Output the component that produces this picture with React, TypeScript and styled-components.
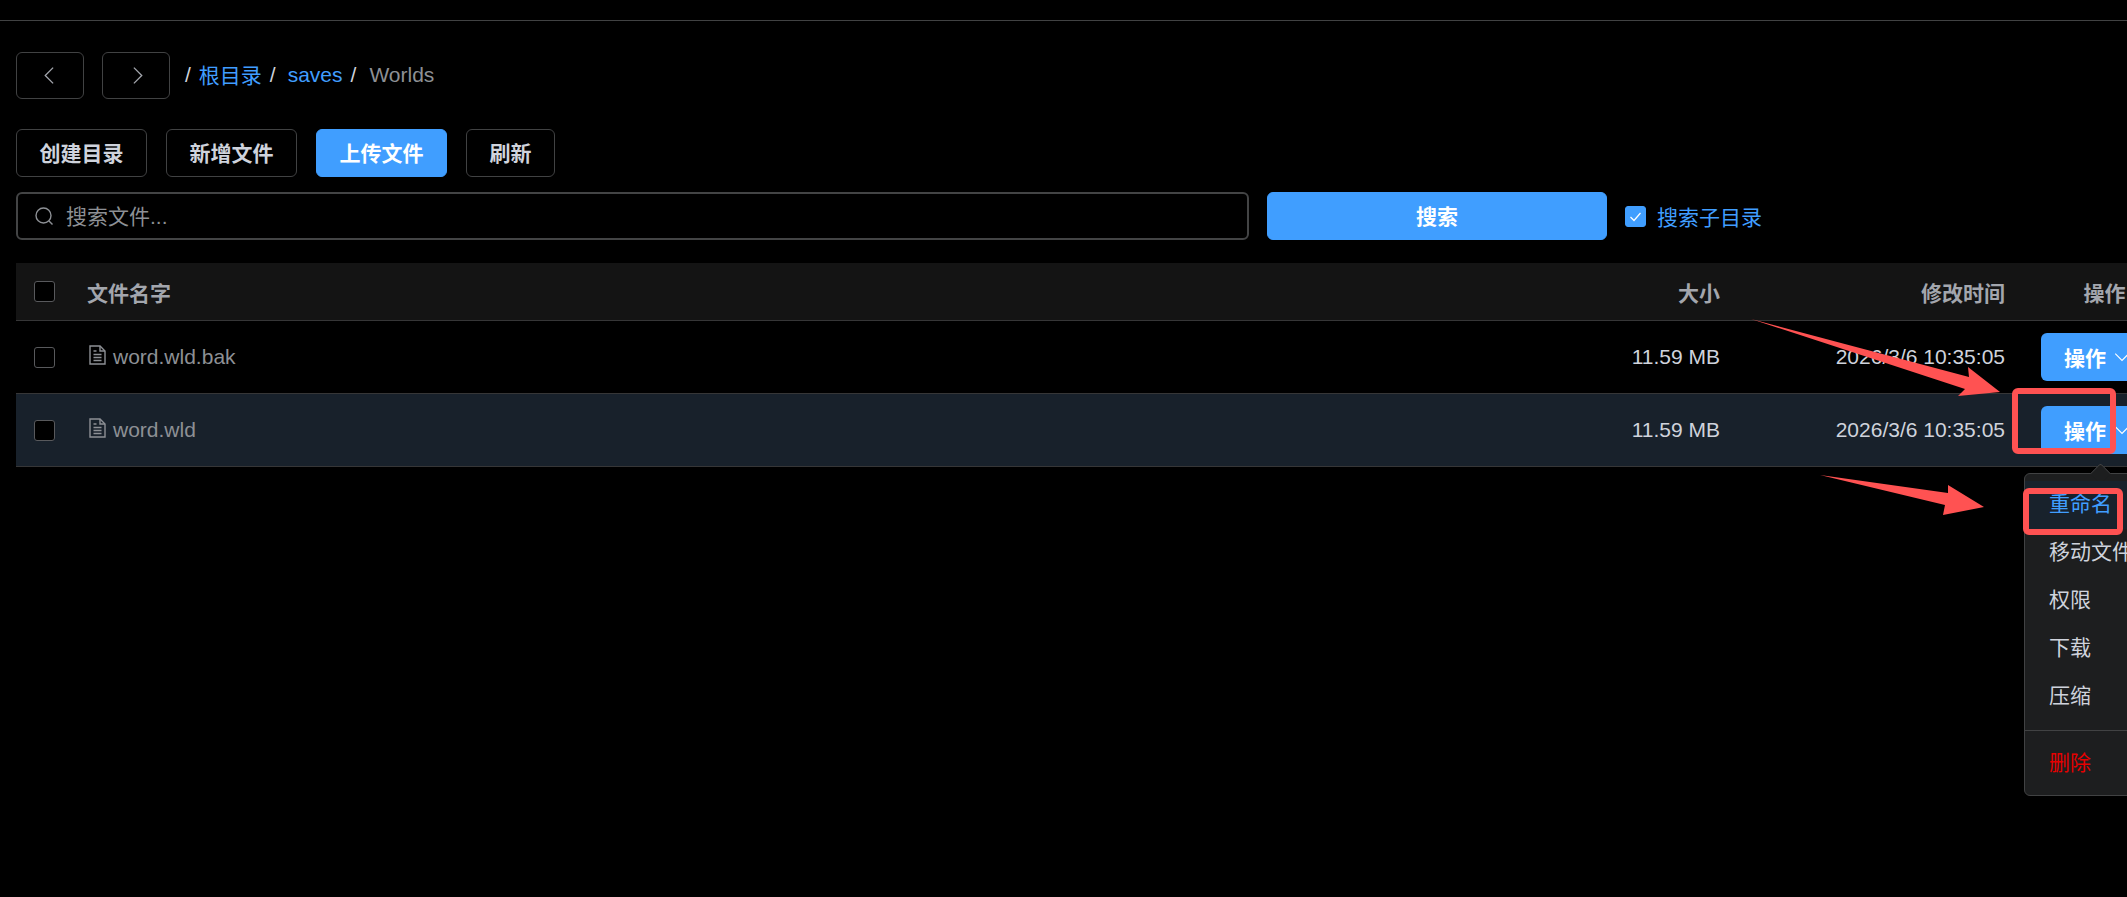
import styled, { createGlobalStyle } from "styled-components";

const GlobalStyle = createGlobalStyle`
  html, body {
    margin: 0;
    padding: 0;
    background: #000;
  }
  body {
    font-family: "Liberation Sans", "Noto Sans CJK SC", sans-serif;
    font-size: 21px;
    color: #cfd3dc;
  }
`;

const Page = styled.div`
  position: relative;
  width: 2127px;
  height: 897px;
  overflow: hidden;
  background: #000;
`;

const TopBar = styled.div`
  height: 20px;
  border-bottom: 1px solid #414243;
`;

const Content = styled.div`
  display: flex;
  flex-direction: column;
  padding: 31px 0 0 16px;
`;

const NavRow = styled.div`
  display: flex;
  align-items: center;
  height: 47px;
`;

const NavButton = styled.button`
  display: flex;
  align-items: center;
  justify-content: center;
  width: 68px;
  height: 47px;
  margin-right: 18px;
  padding: 0;
  background: transparent;
  border: 1px solid #414243;
  border-radius: 6px;
  color: #a3a6ad;
`;

const Crumbs = styled.div`
  display: flex;
  align-items: center;
  margin: 0 0 1px -3px;
  white-space: nowrap;
`;

const Sep = styled.span`
  margin-right: ${(p: { $gap?: number }) => p.$gap ?? 8}px;
  color: #cfd3dc;
`;

const CrumbLink = styled.span<{ $cjk?: boolean }>`
  margin-right: 8px;
  margin-bottom: ${(p) => (p.$cjk ? 2 : 0)}px;
  color: #409eff;
`;

const CrumbCurrent = styled.span`
  color: #8d9095;
`;

const ActionRow = styled.div`
  display: flex;
  gap: 19px;
  margin-top: 30px;
`;

const Button = styled.button<{ $primary?: boolean; $wide?: boolean }>`
  box-sizing: border-box;
  height: 48px;
  padding: 0 ${(p) => (p.$wide ? 0 : 22.5)}px;
  width: ${(p) => (p.$wide ? "340px" : "auto")};
  font-family: inherit;
  font-size: 21px;
  font-weight: 700;
  line-height: 1;
  color: ${(p) => (p.$primary ? "#fff" : "#cfd3dc")};
  background: ${(p) => (p.$primary ? "#409eff" : "transparent")};
  border: 1px solid ${(p) => (p.$primary ? "#409eff" : "#414243")};
  border-radius: 6px;
`;

const SearchRow = styled.div`
  display: flex;
  align-items: center;
  margin-top: 15px;
`;

const SearchBox = styled.div`
  display: flex;
  align-items: center;
  gap: 11px;
  box-sizing: border-box;
  width: 1233px;
  height: 48px;
  margin-right: 18px;
  padding: 0 16px;
  border: 2px solid #434445;
  border-radius: 6px;
  color: #8d9095;
`;

const Placeholder = styled.span`
  margin-top: -3px;
  color: #8d9095;
`;

const CheckLabel = styled.label`
  display: flex;
  align-items: center;
  gap: 11px;
  margin-left: 18px;
  color: #409eff;
`;

const CheckBox = styled.span<{ $checked?: boolean }>`
  display: flex;
  align-items: center;
  justify-content: center;
  box-sizing: border-box;
  flex: none;
  width: 21px;
  height: 21px;
  background: ${(p) => (p.$checked ? "#409eff" : "#000")};
  border: 1px solid ${(p) => (p.$checked ? "#409eff" : "#58595c")};
  border-radius: 3px;
  color: #fff;
`;

const Table = styled.div`
  width: 2170px;
  margin-top: 23px;
`;

const TableRow = styled.div<{ $head?: boolean; $active?: boolean }>`
  display: grid;
  grid-template-columns: 53px 1fr 160px 285px 163px;
  align-items: center;
  box-sizing: border-box;
  height: ${(p) => (p.$head ? 58 : 73)}px;
  background: ${(p) => (p.$head ? "#141414" : p.$active ? "#18212b" : "#000")};
  border-bottom: 1px solid #363637;
  font-weight: ${(p) => (p.$head ? 700 : 400)};
  color: ${(p) => (p.$head ? "#a3a6ad" : "#cfd3dc")};
`;

const SelectCell = styled.div`
  padding-left: 18px;
  display: flex;
`;

const NameCell = styled.div`
  display: flex;
  align-items: center;
  gap: 5px;
  padding-left: 18px;
  color: #a3a6ad;
`;

const FileName = styled.span`
  color: #8d9095;
`;

const FileGlyph = styled.svg`
  flex: none;
  width: 21px;
  height: 21px;
  margin-top: -5px;
  color: #8d9095;
`;

const NumCell = styled.div`
  padding-right: 18px;
  text-align: right;
  white-space: nowrap;
`;

const OpHead = styled.div`
  text-align: center;
`;

const OpCell = styled.div`
  padding-left: 18px;
`;

const OpButton = styled.button`
  display: inline-flex;
  align-items: center;
  gap: 7px;
  height: 48px;
  padding: 0 16px 0 23px;
  font-family: inherit;
  font-size: 21px;
  font-weight: 700;
  color: #fff;
  background: #409eff;
  border: 0;
  border-radius: 6px;
`;

const Menu = styled.div`
  position: absolute;
  left: 2024px;
  top: 473px;
  box-sizing: border-box;
  width: 134px;
  height: 323px;
  padding: 7px 0;
  background: #1d1e1f;
  border: 1px solid #414243;
  border-radius: 6px;
  &::before {
    content: "";
    position: absolute;
    left: 68px;
    top: -8px;
    width: 14px;
    height: 14px;
    background: #1d1e1f;
    border-left: 1px solid #414243;
    border-top: 1px solid #414243;
    transform: rotate(45deg);
    border-top-left-radius: 3px;
  }
`;

const MenuItem = styled.div<{ $active?: boolean; $danger?: boolean }>`
  position: relative;
  height: 48px;
  padding-left: 24px;
  line-height: 46px;
  white-space: nowrap;
  background: ${(p) => (p.$active ? "#18222c" : "transparent")};
  color: ${(p) => (p.$danger ? "#e60000" : p.$active ? "#409eff" : "#cfd3dc")};
`;

const MenuDivider = styled.div`
  margin: 9px 0;
  border-top: 1px solid #414243;
`;

const Overlay = styled.svg`
  position: absolute;
  left: 0;
  top: 0;
  width: 2127px;
  height: 897px;
  pointer-events: none;
`;

function Chevron({ dir, size }: { dir: "left" | "right" | "down"; size: number }) {
  const d = {
    left: "M10 2 4 8l6 6",
    right: "M6 2l6 6-6 6",
    down: "M2 5l6 6 6-6",
  }[dir];
  return (
    <svg width={size} height={size} viewBox="0 0 16 16" fill="none" stroke="currentColor" strokeWidth="1">
      <path d={d} />
    </svg>
  );
}

function SearchGlyph() {
  return (
    <svg width="21" height="21" viewBox="0 0 21 21" fill="none" stroke="currentColor" strokeWidth="1.4">
      <circle cx="9.5" cy="9.5" r="7.5" />
      <path d="M15 15l3.5 3.5" />
    </svg>
  );
}

function CheckGlyph() {
  return (
    <svg width="15" height="15" viewBox="0 0 15 15" fill="none" stroke="currentColor" strokeWidth="1.2">
      <path d="M2.5 8l3.5 3.5 6.5-7.5" />
    </svg>
  );
}

function FileIcon() {
  return (
    <FileGlyph viewBox="0 0 21 21" fill="none" stroke="currentColor" strokeWidth="1.4">
      <path d="M3 2h10l5 5v13H3z" />
      <path d="M13 2v5h5M6.5 10.5h8M6.5 13.5h8M6.5 16.5h8M6.5 7h3" />
    </FileGlyph>
  );
}

const rows = [
  { name: "word.wld.bak", size: "11.59 MB", time: "2026/3/6 10:35:05" },
  { name: "word.wld", size: "11.59 MB", time: "2026/3/6 10:35:05", active: true },
];

const menuItems = ["移动文件", "权限", "下载", "压缩"];

export default function App() {
  return (
    <Page>
      <GlobalStyle />
      <TopBar />
      <Content>
        <NavRow>
          <NavButton>
            <Chevron dir="left" size={21} />
          </NavButton>
          <NavButton>
            <Chevron dir="right" size={21} />
          </NavButton>
          <Crumbs>
            <Sep>/</Sep>
            <CrumbLink $cjk>根目录</CrumbLink>
            <Sep $gap={12}>/</Sep>
            <CrumbLink>saves</CrumbLink>
            <Sep $gap={13}>/</Sep>
            <CrumbCurrent>Worlds</CrumbCurrent>
          </Crumbs>
        </NavRow>
        <ActionRow>
          <Button>创建目录</Button>
          <Button>新增文件</Button>
          <Button $primary>上传文件</Button>
          <Button>刷新</Button>
        </ActionRow>
        <SearchRow>
          <SearchBox>
            <SearchGlyph />
            <Placeholder>搜索文件...</Placeholder>
          </SearchBox>
          <Button $primary $wide>搜索</Button>
          <CheckLabel>
            <CheckBox $checked>
              <CheckGlyph />
            </CheckBox>
            搜索子目录
          </CheckLabel>
        </SearchRow>
        <Table>
          <TableRow $head>
            <SelectCell>
              <CheckBox />
            </SelectCell>
            <NameCell>文件名字</NameCell>
            <NumCell>大小</NumCell>
            <NumCell>修改时间</NumCell>
            <OpHead>操作</OpHead>
          </TableRow>
          {rows.map((row) => (
            <TableRow key={row.name} $active={row.active}>
              <SelectCell>
                <CheckBox />
              </SelectCell>
              <NameCell>
                <FileIcon />
                <FileName>{row.name}</FileName>
              </NameCell>
              <NumCell>{row.size}</NumCell>
              <NumCell>{row.time}</NumCell>
              <OpCell>
                <OpButton>
                  操作
                  <Chevron dir="down" size={18} />
                </OpButton>
              </OpCell>
            </TableRow>
          ))}
        </Table>
      </Content>
      <Menu>
        <MenuItem $active>重命名</MenuItem>
        {menuItems.map((item) => (
          <MenuItem key={item}>{item}</MenuItem>
        ))}
        <MenuDivider />
        <MenuItem $danger>删除</MenuItem>
      </Menu>
      <Overlay viewBox="0 0 2127 897">
        <polygon points="1751,319 1969,377 1968,367 2000,392 1958,396 1965,389" fill="#ff5252" />
        <polygon points="1820,475 1948,493 1948,485 1984,507 1943,515 1945,505" fill="#ff5252" />
        <rect x="2015" y="391" width="98" height="60" rx="3" fill="none" stroke="#ff5252" strokeWidth="6" />
        <rect x="2026" y="491" width="94" height="41" rx="3" fill="none" stroke="#ff5252" strokeWidth="6" />
      </Overlay>
    </Page>
  );
}
